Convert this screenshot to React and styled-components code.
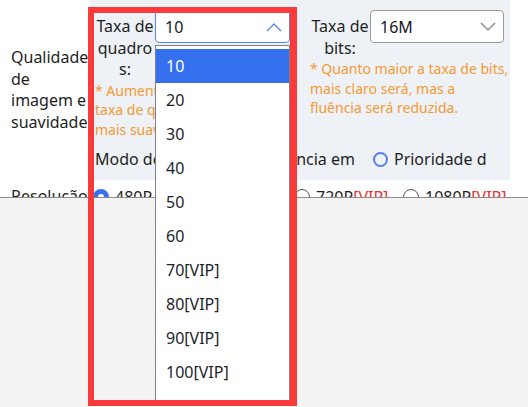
import React from 'react';
import styled, { createGlobalStyle } from 'styled-components';

const GlobalStyle = createGlobalStyle`
  html, body {
    margin: 0;
    padding: 0;
  }
  body {
    background: #f3f3f3;
    font-family: 'Noto Sans', 'Open Sans', sans-serif;
    color: #1e1f24;
  }
`;

const Screen = styled.div`
  position: relative;
  min-height: 100vh;
  overflow: hidden;
`;

const Settings = styled.div`
  height: 197px;
  overflow: hidden;
  background: #fff;
  border-bottom: 1px solid #8d8d8d;
`;

const SettingRow = styled.div`
  display: flex;
  align-items: center;
  margin-top: ${({ $gap }) => $gap || 0}px;
`;

const RowLabel = styled.div`
  flex-shrink: 0;
  width: 79px;
  padding-left: 11px;
  font-size: 16px;
  line-height: 21.5px;
`;

const Panel = styled.div`
  box-sizing: border-box;
  width: 420px;
  height: 180px;
  padding: 10px 6px 0 5px;
  background: #eef1f5;
`;

const Fields = styled.div`
  display: flex;
  align-items: flex-start;
  gap: 20px;
`;

const Field = styled.div`
  display: flex;
  flex-direction: column;
`;

const FieldTop = styled.div`
  display: flex;
  align-items: flex-start;
`;

const FieldLabel = styled.div`
  width: 60px;
  margin-top: 6px;
  font-size: 16px;
  line-height: 21.5px;
  text-align: center;
  overflow-wrap: anywhere;
`;

const SelectBox = styled.div`
  box-sizing: border-box;
  width: ${({ $w }) => $w}px;
  height: 33px;
  display: flex;
  align-items: center;
  justify-content: space-between;
  padding: 0 7px 0 9px;
  background: #fff;
  border: 1px solid ${({ $open }) => ($open ? '#5784ea' : '#9b9b9b')};
  border-radius: 4px;
  font-size: 16px;
  color: #16181f;
`;

const Note = styled.div`
  font-size: 14px;
  line-height: 19.6px;
  white-space: nowrap;
  color: #f39a33;
`;

const ModeRow = styled.div`
  display: flex;
  align-items: center;
  width: 392px;
  margin-top: 9px;
  overflow: hidden;
  white-space: nowrap;
  font-size: 16px;
  line-height: 22px;
`;

const RadioText = styled.span`
  margin-left: ${({ $gap }) => $gap || 0}px;
`;

const Radio = styled.span`
  box-sizing: border-box;
  flex-shrink: 0;
  display: inline-block;
  width: ${({ $size }) => $size || 16}px;
  height: ${({ $size }) => $size || 16}px;
  margin-left: ${({ $gap }) => $gap || 0}px;
  border-radius: 50%;
  border: ${({ $on, $ring }) =>
    $on ? '5px solid #3a6ff0' : $ring ? '2px solid #5a7cf2' : '1px solid #555'};
  background: ${({ $ring }) => ($ring ? 'transparent' : '#fff')};
`;

const Choices = styled.div`
  display: grid;
  grid-template-columns: 80px 121px 109px auto;
  margin-left: 3px;
  font-size: 16px;
  line-height: 22px;
  white-space: nowrap;
`;

const Choice = styled.label`
  display: flex;
  align-items: center;
  gap: 6px;
`;

const Vip = styled.span`
  color: #e8312f;
`;

const OptionList = styled.ul`
  position: absolute;
  left: 155px;
  top: 45px;
  z-index: 5;
  box-sizing: border-box;
  width: 135px;
  height: 358px;
  margin: 0;
  padding: 3px 0 0;
  list-style: none;
  overflow: hidden;
  background: #fff;
  border: 1px solid #7e808c;
  border-bottom: none;
`;

const OptionItem = styled.li`
  height: 34px;
  line-height: 34px;
  padding-left: 10px;
  font-size: 16px;
  background: ${({ $active }) => ($active ? '#3570ee' : 'transparent')};
  color: ${({ $active }) => ($active ? '#fff' : '#1c1f2a')};
`;

const Highlight = styled.div`
  position: absolute;
  left: 88px;
  top: 7px;
  z-index: 10;
  box-sizing: border-box;
  width: 209px;
  height: 399px;
  border: 6px solid #fc3a3a;
  border-right-width: 7px;
  pointer-events: none;
`;

const Chevron = ({ up, color }) => (
  <svg width="16" height="10" viewBox="0 0 16 10" fill="none">
    <polyline
      points={up ? '1,9 8,2 15,9' : '1,1 8,8 15,1'}
      stroke={color}
      strokeWidth="1.4"
      strokeLinejoin="round"
    />
  </svg>
);

const frameRates = ['10', '20', '30', '40', '50', '60', '70[VIP]', '80[VIP]', '90[VIP]', '100[VIP]', '120[VIP]'];

export default function App() {
  return (
    <Screen>
      <GlobalStyle />
      <Settings>
        <SettingRow>
          <RowLabel>Qualidade de imagem e suavidade</RowLabel>
          <Panel>
            <Fields>
              <Field>
                <FieldTop>
                  <FieldLabel>Taxa de quadros:</FieldLabel>
                  <SelectBox $w={135} $open>
                    <span>10</span>
                    <Chevron up color="#5a84e8" />
                  </SelectBox>
                </FieldTop>
                <Note>
                  * Aumentando o valor da
                  <br />
                  taxa de quadros, a imagem
                  <br />
                  mais suave ficará.
                </Note>
              </Field>
              <Field>
                <FieldTop>
                  <FieldLabel>Taxa de bits:</FieldLabel>
                  <SelectBox $w={134}>
                    <span>16M</span>
                    <Chevron color="#8a8a8a" />
                  </SelectBox>
                </FieldTop>
                <Note>
                  * Quanto maior a taxa de bits,
                  <br />
                  mais claro será, mas a
                  <br />
                  fluência será reduzida.
                </Note>
              </Field>
            </Fields>
            <ModeRow>
              <span>Modo de vídeo por preferência em</span>
              <Radio $ring $size={15} $gap={18} />
              <RadioText $gap={6}>Prioridade de qualidade</RadioText>
            </ModeRow>
          </Panel>
        </SettingRow>
        <SettingRow $gap={6}>
          <RowLabel>Resolução</RowLabel>
          <Choices>
            <Choice>
              <Radio $on />
              <span>480P</span>
            </Choice>
            <Choice>
              <Radio />
              <span>540P</span>
            </Choice>
            <Choice>
              <Radio />
              <span>
                720P<Vip>[VIP]</Vip>
              </span>
            </Choice>
            <Choice>
              <Radio />
              <span>
                1080P<Vip>[VIP]</Vip>
              </span>
            </Choice>
          </Choices>
        </SettingRow>
      </Settings>
      <OptionList>
        {frameRates.map((rate, i) => (
          <OptionItem key={rate} $active={i === 0}>
            {rate}
          </OptionItem>
        ))}
      </OptionList>
      <Highlight />
    </Screen>
  );
}
